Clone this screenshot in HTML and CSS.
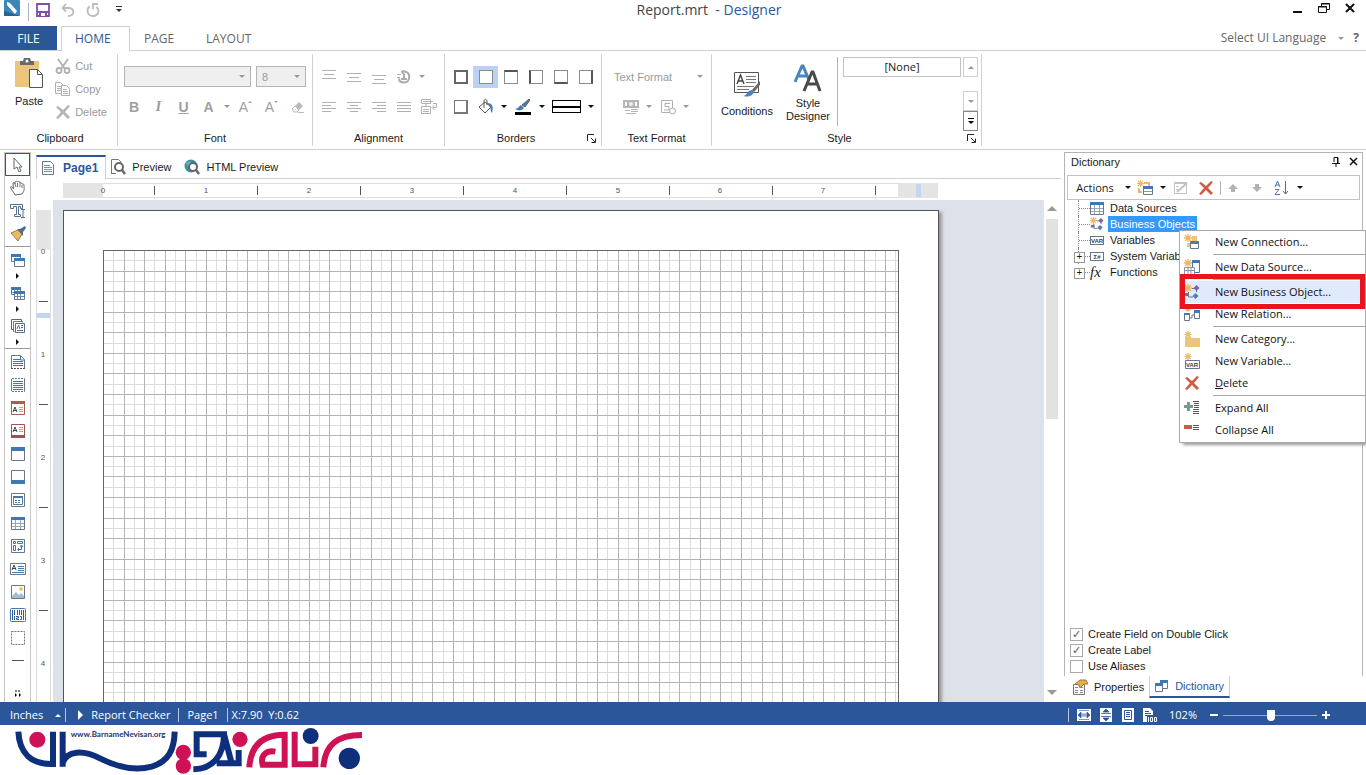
FILE: index.html
```html
<!DOCTYPE html>
<html lang="en">
<head>
<meta charset="utf-8">
<title>Report.mrt - Designer</title>
<link rel="stylesheet" href="styles.css">
</head>
<body>
<svg class="defs" aria-hidden="true">
  <defs>
    <symbol id="star" viewBox="0 0 8 8"><path d="M4 0v8M0 4h8M1 1l6 6M7 1L1 7" stroke="#ecb963" stroke-width="1.4"/><circle cx="4" cy="4" r="2" fill="#ecb963"/></symbol>
    <symbol id="cross" viewBox="0 0 16 16"><path d="M1 3l2-1 5 4 5-5 2 1-5 6 5 5-2 2-5-5-5 5-2-1 5-6z" fill="currentColor"/></symbol>
    <symbol id="table" viewBox="0 0 14 14"><path d="M.5 1.500h13v12H.5z" fill="#fff" stroke="#68788c"/><path d="M0 1h14v3H0z" fill="#3f78b5"/><path d="M1 7.500h12M1 10.500h12M4.500 4v9M9.500 4v9" stroke="#9aa5b3"/></symbol>
    <symbol id="bizobj" viewBox="0 0 16 16"><path d="M4.500 8v5H9M8 4.500h4.500V8" fill="none" stroke="#68788c"/><use href="#star" width="8" height="8"/><path d="M12.500 1l3 3-3 3-3-3z" fill="#8060b0"/><path d="M11.500 9l3 3-3 3-3-3z" fill="#4d7fb8"/><path d="M1 9h4v3H1z" fill="#68788c"/></symbol>
    <symbol id="win2" viewBox="0 0 14 14"><path d="M.5 1.500h9v7h-9z" fill="#fff" stroke="#68788c"/><path d="M0 1h10v3H0z" fill="#3f78b5"/><path d="M3.500 5.500h10v8h-10z" fill="#fff" stroke="#68788c"/><path d="M3 5h11v3H3z" fill="#3f78b5"/></symbol>
    <symbol id="launch" viewBox="0 0 9 9"><path d="M.5 7V.5H7M4 4l4 4M8.500 4.500v4h-4" fill="none" stroke="#222"/></symbol>
    <symbol id="lens" viewBox="0 0 16 16"><circle cx="9" cy="8" r="4" fill="#fff" stroke="#666" stroke-width="2"/><path d="M12 11l3 4" stroke="#666" stroke-width="2.500"/></symbol>
  </defs>
</svg>
<div class="app">
  <header class="titlebar">
    <div class="quick">
      <svg class="i16" viewBox="0 0 16 16"><rect width="16" height="16" rx="1" fill="#3f86b8"/><path d="M0 11l16 5H0z" fill="#236594"/><path d="M3 2l3 1 7 8-2 3-8-9z" fill="#fff"/></svg>
      <span class="vline"></span>
      <button class="plain" aria-label="Save"><svg class="i14" viewBox="0 0 14 14"><path d="M1 1h12v12H1z" fill="#fff" stroke="#8150a5" stroke-width="1.800"/><path d="M1 8h12v2H1zM3 9h8v4H3z" fill="#8150a5"/><path d="M5 10h4v3H5z" fill="#fff"/></svg></button>
      <button class="plain" aria-label="Undo"><svg class="i14" viewBox="0 0 14 14" fill="none" stroke="#bcbcbc" stroke-width="1.800"><path d="M5 1L1.500 5 5 8.500M2 5h6c6 0 6 8-1 8"/></svg></button>
      <button class="plain" aria-label="Redo"><svg class="i14" viewBox="0 0 14 14" fill="none" stroke="#bcbcbc" stroke-width="1.800"><path d="M4 3c-4 3-3 10 3 10s7-7 3-9M7 6V1h5"/></svg></button>
      <button class="plain more" aria-label="Customize"><svg viewBox="0 0 6 7" width="6" height="7"><path d="M0 .5h6" stroke="#333"/><path d="M0 3h6L3 6z" fill="#333"/></svg></button>
    </div>
    <h1 class="title">Report.mrt &nbsp;<span>- Designer</span></h1>
    <div class="winbtns">
      <button class="plain" aria-label="Minimize"><svg viewBox="0 0 12 12"><path d="M1 9h9" stroke="#111" stroke-width="2"/></svg></button>
      <button class="plain" aria-label="Restore"><svg viewBox="0 0 12 12" fill="#fff" stroke="#111"><path d="M3.500 .5h8v6h-8zM3 1h9"/><path d="M.5 3.500h8v6h-8zM0 4h9"/></svg></button>
      <button class="plain" aria-label="Close"><svg viewBox="0 0 12 12"><path d="M2 1l8 8M10 1l-8 8" stroke="#111" stroke-width="2"/></svg></button>
    </div>
  </header>

  <nav class="tabs">
    <button class="tab file">FILE</button><button class="tab on">HOME</button><button class="tab">PAGE</button><button class="tab">LAYOUT</button>
    <div class="lang"><button class="plain">Select UI Language</button><i class="dn g"></i><b>?</b></div>
  </nav>

  <section class="ribbon">
    <div class="group clip">
      <div class="gbody">
        <button class="plain paste"><svg viewBox="0 0 28 31" width="28" height="31"><path d="M0 3h24v26H0z" fill="#ecc47c"/><path d="M5 3h3l1-3h6l1 3h3v4H5z" fill="#6a6a6a"/><circle cx="12" cy="3" r="1.500" fill="#fff"/><path d="M14.500 11.500h8l5 5v13h-13z" fill="#fff" stroke="#555"/><path d="M22.500 11.500v5h5" fill="none" stroke="#555"/></svg>Paste</button>
        <div class="cmds dim">
          <button class="plain"><svg class="i16" viewBox="0 0 16 16" fill="none" stroke="#b0b0b0" stroke-width="1.800"><path d="M3 1l7 10M13 1L6 11"/><circle cx="4" cy="12.500" r="2.500"/><circle cx="12" cy="12.500" r="2.500"/></svg>Cut</button>
          <button class="plain"><svg class="i16" viewBox="0 0 16 16" fill="#fff" stroke="#b0b0b0"><path d="M.5 1.500h5l3 3v8h-8zM2 5.500h4M2 7.500h4M2 9.500h4"/><path d="M6.500 4.500h5l3 3v7h-8zM8 8.500h4M8 10.500h5M8 12.500h5"/></svg>Copy</button>
          <button class="plain"><svg class="i16"><use href="#cross"/></svg>Delete</button>
        </div>
      </div>
      <div class="glabel">Clipboard</div>
    </div>

    <div class="group font">
      <div class="gbody col">
        <div class="row combos"><span class="combo wide"><select aria-label="Font name" disabled><option></option></select><i class="dn g"></i></span><span class="combo"><select aria-label="Font size" disabled><option>8</option></select><i class="dn g"></i></span></div>
        <div class="row fmt">
          <button class="plain b">B</button><button class="plain it">I</button><button class="plain u">U</button><button class="plain b">A</button><button class="plain thin" aria-label="Font color"><i class="dn g"></i></button>
          <button class="plain" aria-label="Grow font">A<svg viewBox="0 0 5 14" width="5" height="14"><path d="M0 3h4L2 1z" fill="#a0a0a0"/></svg></button>
          <button class="plain" aria-label="Shrink font">A<svg viewBox="0 0 5 14" width="5" height="14"><path d="M0 1h4L2 3z" fill="#a0a0a0"/></svg></button>
          <button class="plain" aria-label="Clear"><svg viewBox="0 0 14 14" class="i14"><path d="M1 9l7-7 4 4-6 6H3z" fill="#bbb"/><path d="M1 9l3-3 4 4-2 2H3z" fill="#fff" stroke="#bbb"/><path d="M7 12.500h6" stroke="#bbb"/></svg></button>
        </div>
      </div>
      <div class="glabel">Font</div>
    </div>

    <div class="group align">
      <div class="gbody col">
        <div class="row">
          <button class="plain" aria-label="Top"><svg class="i14 ln" viewBox="0 0 14 14"><path d="M0 .5h14M2 4.500h10M0 8.500h14"/></svg></button>
          <button class="plain" aria-label="Middle"><svg class="i14 ln" viewBox="0 0 14 14"><path d="M0 3.500h14M2 7.500h10M0 11.500h14"/></svg></button>
          <button class="plain" aria-label="Bottom"><svg class="i14 ln" viewBox="0 0 14 14"><path d="M0 5.500h14M2 9.500h10M0 13.500h14"/></svg></button>
          <button class="plain" aria-label="Angle"><svg class="i14" viewBox="0 0 14 14" fill="none" stroke="#aaa" stroke-width="2"><path d="M7 1.500c7 0 7 11 0 11-4 0-5-2-5-4M7 4v5M4 9h6M7 0L5 2l2 2"/><path d="M0 4.500h4M0 7.500h3" stroke-width="1"/></svg></button>
          <button class="plain thin" aria-label="Angle menu"><i class="dn g"></i></button>
        </div>
        <div class="row">
          <button class="plain" aria-label="Left"><svg class="i14 ln" viewBox="0 0 14 14"><path d="M0 2.500h14M0 5.500h9M0 8.500h14M0 11.500h9"/></svg></button>
          <button class="plain" aria-label="Center"><svg class="i14 ln" viewBox="0 0 14 14"><path d="M0 2.500h14M3 5.500h8M0 8.500h14M3 11.500h8"/></svg></button>
          <button class="plain" aria-label="Right"><svg class="i14 ln" viewBox="0 0 14 14"><path d="M0 2.500h14M5 5.500h9M0 8.500h14M5 11.500h9"/></svg></button>
          <button class="plain" aria-label="Justify"><svg class="i14 ln" viewBox="0 0 14 14"><path d="M0 2.500h14M0 5.500h14M0 8.500h14M0 11.500h14"/></svg></button>
          <button class="plain" aria-label="Wrap"><svg class="i16 ln" viewBox="0 0 16 16"><path d="M.5 .5h9v4h-9zM.5 7.500h9v7h-9zM2 2.500h10M2 10.500h6M2 12.500h6M5 5v2M12 4.500h3.500v4H12M13.500 6L11 8.500l2.500 2.500"/></svg></button>
        </div>
      </div>
      <div class="glabel">Alignment</div>
    </div>

    <div class="group bord">
      <div class="gbody col">
        <div class="row">
          <button class="plain" aria-label="All"><span class="sq all"></span></button><button class="plain sel" aria-label="None"><span class="sq"></span></button><button class="plain" aria-label="Top"><span class="sq t"></span></button><button class="plain" aria-label="Left"><span class="sq l"></span></button><button class="plain" aria-label="Bottom"><span class="sq bt"></span></button><button class="plain" aria-label="Right"><span class="sq r"></span></button>
        </div>
        <div class="row">
          <button class="plain" aria-label="Shadow"><span class="sq sh"></span></button>
          <button class="plain" aria-label="Fill"><svg class="i16" viewBox="0 0 16 16"><path d="M7 3l6 5-6 6-6-6z" fill="#fff" stroke="#555"/><path d="M6 9V2c0-2 3-2 3 0v4" fill="none" stroke="#555"/><path d="M9 4c5 0 7 3 5 10-2-2-1-5-2-6z" fill="#4c7cae"/></svg></button>
          <button class="plain thin" aria-label="Fill menu"><i class="dn"></i></button>
          <button class="plain thick" aria-label="Color"><svg class="i16" viewBox="0 0 16 16"><path d="M0 10c3 0 4-3 6-4l3 3c-2 3-6 3-9 1z" fill="#4c7cae"/><path d="M7 6l7-6 1 1-5 7z" fill="#4c7cae" stroke="#567"/><path d="M0 13h16v3H0z" fill="#000"/></svg></button>
          <button class="plain thin" aria-label="Color menu"><i class="dn"></i></button>
          <button class="plain style" aria-label="Line style"><span class="linebox"></span></button>
          <button class="plain thin" aria-label="Line menu"><i class="dn"></i></button>
        </div>
      </div>
      <div class="glabel">Borders</div>
      <button class="plain launch" aria-label="Borders dialog"><svg width="9" height="9"><use href="#launch"/></svg></button>
    </div>

    <div class="group tf">
      <div class="gbody col dim">
        <div class="row spread"><button class="plain">Text Format</button><i class="dn g"></i></div>
        <div class="row tfi">
          <button class="plain" aria-label="Currency"><svg class="i16" viewBox="0 0 16 16"><path d="M0 1h16v8H0z" fill="#b5b5b5"/><path d="M2 3h2v4H2zM12 3h2v4h-2z" fill="#fff"/><circle cx="8" cy="5" r="2" fill="#eee"/><path d="M8 10.500h7M8 12.500h7M3 14.500h10M2 11.500h5" stroke="#b5b5b5"/></svg></button><button class="plain thin" aria-label="Currency menu"><i class="dn g"></i></button>
          <button class="plain" aria-label="Date"><svg class="i16" viewBox="0 0 16 16"><path d="M1.500 1.500h11v12h-11zM10 4.500H5v3h4v3.500H4" fill="none" stroke="#b0b0b0"/><circle cx="12.500" cy="12" r="3" fill="#fff" stroke="#aaa"/></svg></button><button class="plain thin" aria-label="Date menu"><i class="dn g"></i></button>
        </div>
      </div>
      <div class="glabel">Text Format</div>
    </div>

    <div class="group sty">
      <div class="gbody">
        <button class="plain big cond"><svg viewBox="0 0 28 28" width="28" height="28"><path d="M1.500 2.500h24v20h-24z" fill="#fff" stroke="#555"/><path d="M4 14L7.500 5 11 14M5 11h5" fill="none" stroke="#444" stroke-width="1.400"/><path d="M13 6.500h10M13 9.500h10M13 12.500h10M4 16.500h17M4 19.500h12" stroke="#777"/><path d="M10 26c4 0 4-6 9-6l2 2c-2 5-6 5-11 4z" fill="#4a83bd"/><path d="M19 20l8-9v4l-6 7z" fill="#666"/></svg>Conditions</button>
        <button class="plain big des"><svg viewBox="0 0 28 28" width="28" height="28" fill="none" stroke-width="3"><path d="M1 18L8 2h1l6 14M3 12h9" stroke="#4a83bd"/><path d="M10 27l8-19h1l7 19M13 20h11" stroke="#4a4a4a"/></svg>Style<br>Designer</button>
        <span class="vline tall"></span>
        <button class="stylebox">[None]</button>
        <div class="spin"><button aria-label="Up"><i class="upa"></i></button><span></span><button aria-label="Down"><i class="dn g"></i></button><button class="dk" aria-label="More"><svg viewBox="0 0 6 7" width="6" height="7"><path d="M0 .5h6" stroke="#000"/><path d="M0 3h6L3 6z"/></svg></button></div>
      </div>
      <div class="glabel">Style</div>
      <button class="plain launch" aria-label="Style dialog"><svg width="9" height="9"><use href="#launch"/></svg></button>
    </div>
  </section>

  <main class="work">
    <aside class="tools">
      <button class="on" aria-label="Select"><svg viewBox="0 0 14 14"><path d="M3 0v11l3-2 2 5 2-1-2-4h3z" fill="#fff" stroke="#666"/></svg></button>
      <button aria-label="Hand"><svg viewBox="0 0 16 16"><path d="M5 15C4 12 1 10 0.500 7c1-1 2 0 3 2L3 3c1-1 2 0 2 1V2c1-1 2-1 2.500 0 1-1 2-1 2.500 1 1-1 2 0 2 1 1 0 2 0 2 1 0 4 1 5-2 9z" fill="#fff" stroke="#666"/><path d="M5 4l1 3M7.500 3v4M10 3v4M12 5v3" stroke="#777"/></svg></button>
      <button aria-label="Text"><svg viewBox="0 0 16 16"><path d="M.5 1.500h12v4h-2v-2h-2v8h2v2h-6v-2h2v-8h-3v2h-3z" fill="#fff" stroke="#56708c"/><path d="M11 6.500h4M13 6v8M11 14.500h4" stroke="#56708c"/></svg></button>
      <button aria-label="Brush"><svg viewBox="0 0 16 16"><path d="M1 7l7-3 4 4-4 7z" fill="#ecb963" stroke="#9d7c44"/><path d="M7 3l3 0 5-3 1 2-3 4v4z" fill="#526d8b"/></svg></button>
      <hr>
      <button aria-label="Bands"><svg><use href="#win2"/></svg></button><i class="rt"></i>
      <button aria-label="Cross bands"><svg viewBox="0 0 14 14"><use href="#win2"/><path d="M4 10.500h9M6.500 8v5M9.500 8v5M1 6.500h2M3.500 4v1M6.500 4v1" stroke="#68a"/></svg></button><i class="rt"></i>
      <button aria-label="Components"><svg viewBox="0 0 14 14"><path d="M2 10.500H.5V.5h10V2" fill="none" stroke="#666"/><path d="M3.500 12.500h-1v-10h9v1" fill="none" stroke="#777"/><path d="M4.500 4.500h9v9h-9z" fill="#fff" stroke="#56708c"/><path d="M6 10l1.500-4L9 10M10 6.500h2M10 8.500h2M6 11.500h6" fill="none" stroke="#56708c"/></svg></button><i class="rt"></i>
      <hr>
      <button aria-label="Report title"><svg viewBox="0 0 14 14"><path d="M.5 13V.5h9l4 4V13" fill="#fff" stroke="#68788c"/><path d="M2 4.500h7M2 6.500h10M2 8.500h10M2 10.500h10M9.500 1v4H13" fill="none" stroke="#3f78b5"/><path d="M0 13.500h14" stroke="#555" stroke-dasharray="2 1"/></svg></button>
      <button aria-label="Summary"><svg viewBox="0 0 14 14"><path d="M.5.500h13v13H.500z" fill="#fff" stroke="#68788c"/><path d="M2 3.500h10M2 5.500h10M2 7.500h10M2 9.500h10M2 11.500h10" stroke="#3f78b5"/><path d="M0 .5h14M0 13.500h14" stroke="#fff" stroke-dasharray="1 2"/></svg></button>
      <button aria-label="Page header"><svg viewBox="0 0 14 14"><path d="M.5.500h13v13H.5z" fill="#fff" stroke="#a2624f"/><path d="M0 0h14v3H0z" fill="#a2624f"/><path d="M2 11l2-5 2 5M2 9.500h4" fill="none" stroke="#444"/><path d="M8 6.500h4M8 8.500h4M8 10.500h4" stroke="#d79a8a"/></svg></button>
      <button aria-label="Page footer"><svg viewBox="0 0 14 14"><path d="M.5.500h13v13H.5z" fill="#fff" stroke="#a05050"/><path d="M0 11h14v3H0z" fill="#a05050"/><path d="M2 8l2-5 2 5M2 6.500h4" fill="none" stroke="#444"/><path d="M8 3.500h4M8 5.500h4M8 7.500h4" stroke="#d79a8a"/></svg></button>
      <button aria-label="Header"><svg viewBox="0 0 14 14"><path d="M.5.500h13v13H.5z" fill="#fff" stroke="#68788c"/><path d="M0 0h14v4H0z" fill="#3f78b5"/></svg></button>
      <button aria-label="Footer"><svg viewBox="0 0 14 14"><path d="M.5.500h13v13H.5z" fill="#fff" stroke="#68788c"/><path d="M0 10h14v4H0z" fill="#3f78b5"/></svg></button>
      <button aria-label="Panel"><svg viewBox="0 0 14 14"><path d="M.5.500h13v13H.5zM2.500 3.500h9v8h-9z" fill="#fff" stroke="#68788c"/><path d="M2 3h10v2H2z" fill="#3f78b5"/><path d="M4 7.500h6M4 9.500h6" stroke="#3f78b5" stroke-dasharray="2 1"/></svg></button>
      <button aria-label="Table"><svg><use href="#table"/></svg></button>
      <button aria-label="Cross tab"><svg viewBox="0 0 14 14"><path d="M.5.500h13v13H.5z" fill="#fff" stroke="#68788c"/><path d="M2.500 2.500h2v2h-2zM6.500 2.500h5v2h-5zM2.500 6.500h2v5h-2zM7 10.500h3.500v-4M9 8l1.500-2L12 8M8 9l-1.500 1.500L8 12" fill="none" stroke="#3f78b5"/></svg></button>
      <button aria-label="Text box"><svg viewBox="0 0 16 14"><path d="M.5 1.500h15v11H.500z" fill="#fff" stroke="#68788c"/><path d="M2 8l2-5 2 5M2 6.500h4" fill="none" stroke="#444"/><path d="M8 4.500h6M8 6.500h6M8 8.500h6M2 10.500h12" stroke="#3f78b5"/></svg></button>
      <button aria-label="Image"><svg viewBox="0 0 14 14"><path d="M.5.500h13v13H.5z" fill="#fff" stroke="#68788c"/><path d="M1 13v-2l4-4 3 3 2-2 3 3v2z" fill="#a9bccf"/><circle cx="10" cy="4" r="2" fill="#ecc47c"/></svg></button>
      <button aria-label="Bar code"><svg viewBox="0 0 16 14"><rect x=".5" y=".5" width="15" height="13" rx="1" fill="#fff" stroke="#3f78b5"/><path d="M2.500 2v10M4.500 2v5M7.500 2v5M9.500 2v5M11.500 2v5M13.500 2v10M4.500 8v4M6 8.500h2.500v1.500H6.500v1.500H9M10 8.500h1.500v3H10" fill="none" stroke="#2f5f92"/></svg></button>
      <button aria-label="Shape"><svg viewBox="0 0 14 14"><path d="M.5.500h13v13H.5z" fill="#fff" stroke="#777" stroke-dasharray="2 1"/></svg></button>
      <button aria-label="Line"><svg viewBox="0 0 14 14"><path d="M1 6.500h12" stroke="#555"/></svg></button>
      <button class="last" aria-label="More tools"><svg class="i8" viewBox="0 0 8 8"><path d="M1 1h2M4 1h2" stroke="#000"/><path d="M1 3l2 2-2 2zM5 3l2 2-2 2z"/></svg></button>
    </aside>

    <section class="center">
      <div class="doctabs">
        <button class="dt on"><svg class="i14" viewBox="0 0 14 14"><path d="M1.500.5h8l3 3v10h-11z" fill="#fff" stroke="#68788c"/><path d="M3 4.500h6M3 6.500h8M3 8.500h8M3 10.500h8" stroke="#7796ba"/></svg>Page1</button>
        <button class="dt"><svg class="i16" viewBox="0 0 16 16"><path d="M1.500 14V.5h7l3 3" fill="none" stroke="#777"/><path d="M1 14.500h5" stroke="#777"/><use href="#lens"/></svg>Preview</button>
        <button class="dt web"><svg class="i16" viewBox="0 0 16 16"><circle cx="7" cy="7" r="6.500" fill="#3a8fa8"/><path d="M2 4l4-2 2 3-4 3z" fill="#6cb8a0"/><use href="#lens"/></svg>HTML Preview</button>
      </div>
      <div class="stage">
        <svg class="hruler" id="hruler" aria-label="Horizontal ruler"></svg>
        <svg class="vruler" id="vruler" aria-label="Vertical ruler"></svg>
        <div class="canvas"><div class="sheet"><svg class="grid" id="grid"></svg></div></div>
        <div class="scroll"><i class="upa"></i><span class="thumb"></span><i class="dn g"></i></div>
      </div>
    </section>

    <aside class="side">
      <div class="dict">
        <div class="dhead">Dictionary<span><svg viewBox="0 0 10 10" width="10" height="10"><path d="M3 5V.500h4V6M1 6.500h8M5 6v4M6.500 1v5" fill="none" stroke="#111"/></svg><svg viewBox="0 0 10 10" width="10" height="10"><path d="M1 1l7 7M8 1L1 8" stroke="#111" stroke-width="1.500"/></svg></span></div>
        <div class="dbar">
          <button class="plain act">Actions</button><i class="dn"></i>
          <svg class="i16" viewBox="0 0 16 16"><use href="#star" width="7" height="7"/><path d="M2 8v4h3M7 3h5v3" fill="none" stroke="#ecb963" stroke-width="2"/><path d="M6.500 6.500h9v8h-9z" fill="#fff" stroke="#68788c"/><path d="M6 6h10v3H6z" fill="#3f78b5"/><path d="M7 11.500h8" stroke="#89a"/></svg><i class="dn"></i>
          <svg class="i14 ed" viewBox="0 0 14 14" fill="none" stroke="#c2c2c2"><path d="M.5 1.500h12v11H.500zM0 2.500h13M2 5.500h3M2 8.500h2"/><path d="M3 11L13 2" stroke-width="2"/></svg>
          <svg class="i16 red"><use href="#cross"/></svg><span class="vline"></span>
          <svg class="i16" viewBox="0 0 16 16"><path d="M8 4l5 5h-3v3H6V9H3z" fill="#b2b2b2"/></svg>
          <svg class="i16 ar" viewBox="0 0 16 16"><path d="M8 12l5-5h-3V4H6v3H3z" fill="#b2b2b2"/></svg>
          <svg class="i16 az" viewBox="0 0 16 16" fill="none"><path d="M1 7l2.500-6L6 7M2 5h3" stroke="#3f78b5"/><path d="M1 9.500h4l-4 5h5" stroke="#8060b0"/><path d="M11.500 1v13M9 11l2.500 3 2.500-3" stroke="#666"/></svg><i class="dn"></i>
        </div>
        <ul class="tree">
          <li><i class="br"></i><svg viewBox="0 0 14 14"><use href="#table"/></svg>Data Sources</li>
          <li class="sel"><i class="br"></i><svg viewBox="0 0 16 16"><use href="#bizobj"/></svg><span>Business Objects</span></li>
          <li><i class="br"></i><svg viewBox="0 0 14 14"><path d="M0 3.500h14M0 11.500h14M.5 3v9M13.500 3v9" stroke="#68788c"/><text class="tag" x="7" y="10">VAR</text></svg>Variables</li>
          <li><i class="br plus"></i><svg viewBox="0 0 14 14"><path d="M0 3.500h14M0 11.500h14M.5 3v9M13.500 3v9" stroke="#68788c"/><text class="tag" x="7" y="10">Σ#</text></svg>System Variables</li>
          <li class="end"><i class="br plus"></i><em>fx</em>Functions</li>
        </ul>
        <div class="opts">
          <label><input type="checkbox" checked>Create Field on Double Click</label>
          <label><input type="checkbox" checked>Create Label</label>
          <label><input type="checkbox">Use Aliases</label>
        </div>
      </div>
      <div class="ptabs">
        <button class="pt"><svg class="i16" viewBox="0 0 16 16"><path d="M1.500 5.500h11v10h-11z" fill="#fff" stroke="#777"/><path d="M3 8.500h3M3 11.500h3M3 13.500h3M8 8.500h3M8 11.500h3M8 13.500h3" stroke="#888"/><path d="M3 5l5-4 6 0 2 4-4 0-4 4-1-3z" fill="#e3b04c" stroke="#987a38"/></svg>Properties</button>
        <button class="pt on"><svg class="i14" viewBox="0 0 14 14"><path d="M5.500 1.500h7v8h-7z" fill="#fff" stroke="#68788c"/><path d="M5 1h8v3H5z" fill="#3f78b5"/><path d="M.5 4.500h7v8h-7z" fill="#fff" stroke="#68788c"/><path d="M0 4h8v3H0z" fill="#3f78b5"/></svg>Dictionary</button>
      </div>
    </aside>
  </main>

  <footer class="status">
    <button class="plain">Inches</button><i class="upa w"></i><span class="vline"></span>
    <button class="plain chk"><i class="rt w"></i>Report Checker</button><span class="vline"></span>
    <span>Page1</span><span class="vline"></span><span class="xy">X:7.90 &nbsp;Y:0.62</span>
    <div class="zoom">
      <span class="vline"></span>
      <svg viewBox="0 0 14 14"><path d="M0 1h14v12H0z" fill="#fff"/><path d="M1 7l3-3v2h6V4l3 3-3 3V8H4v2zM2 2.500h10M2 11.500h10" fill="#2b579a" stroke="#2b579a" stroke-width=".6"/><path d="M4 7h6" stroke="#fff"/></svg>
      <svg viewBox="0 0 14 14"><path d="M1 0h12v14H1z" fill="#fff"/><path d="M7 1l3 3H4zM7 13l3-3H4zM2 5.500h10M2 8.500h10" fill="#2b579a" stroke="#2b579a" stroke-width=".8"/></svg>
      <svg viewBox="0 0 14 14"><path d="M1 0h12v14H1z" fill="#fff"/><path d="M3.500 2.500h7v9h-7zM5 4.500h4M5 6.500h4M5 8.500h4" fill="none" stroke="#2b579a"/></svg>
      <svg viewBox="0 0 14 14"><path d="M0 0h7l3 3v4H4v7H0z" fill="#fff"/><path d="M2 3.500h4M2 5.500h6M2 7.500h2" stroke="#2b579a"/><path d="M5.500 9v5M7.500 9.500h2v4h-2zM11.500 9.500h2v4h-2z" fill="none" stroke="#fff"/></svg>
      <span class="pct">102%</span>
      <button class="plain" aria-label="Zoom out"><svg class="i8" viewBox="0 0 8 8"><path d="M0 4h8" stroke="#fff" stroke-width="2"/></svg></button><input type="range" min="0" max="100" value="51" aria-label="Zoom"><button class="plain" aria-label="Zoom in"><svg class="i8" viewBox="0 0 8 8"><path d="M0 4h8M4 0v8" stroke="#fff" stroke-width="2"/></svg></button>
    </div>
  </footer>

  <div class="brand">
    <svg viewBox="0 75 1140 150" width="380" height="50" fill="none" stroke-width="18" role="img" aria-label="BarnameNevisan">
      <g stroke="#0d2f7c">
        <path d="M55 95C58 160 95 194 159 192V95M188 95V200M188 190C200 150 250 150 300 175S400 215 455 200C505 185 523 150 524 95"/>
        <path d="M620 163H590V103H672C672 165 640 207 580 208M650 190H716V150M672 103L695 190"/>
      </g>
      <g stroke="#cf1155">
        <path d="M748 202C752 135 790 104 854 104V194H788C780 165 800 150 826 155M884 95V193H946V140M970 202C975 135 1010 105 1086 105"/>
      </g>
      <g fill="#cf1155"><circle cx="112" cy="119" r="24"/><circle cx="550" cy="157" r="23"/><circle cx="550" cy="198" r="23"/><circle cx="720" cy="118" r="23"/></g>
      <g fill="#0d2f7c"><circle cx="932" cy="108" r="24"/><circle cx="1048" cy="175" r="32"/></g>
      <text class="url" x="212" y="111">www.BarnameNevisan.org</text>
    </svg>
  </div>

  <div class="menu" role="menu">
    <button><svg viewBox="0 0 16 16"><use href="#star" width="8" height="8"/><path d="M8 2h5v5H8zM3 9h3v4H3z" fill="#ecc47c"/><path d="M6.500 7.500h8v7h-8z" fill="#fff" stroke="#68788c"/><path d="M6 7h9v3H6z" fill="#68788c"/></svg>New Connection...</button><hr>
    <button><svg viewBox="0 0 16 16"><path d="M8.500 1.500h7v12h-7z" fill="#fff" stroke="#3f78b5"/><path d="M8 1h8v3H8z" fill="#3f78b5"/><use href="#star" width="8" height="8"/><path d="M.5 8.500h10v7H.500zM0 11.500h10M4 8v7M7 8v7" fill="#fff" stroke="#8995a5"/></svg>New Data Source...</button><hr>
    <button class="hot"><svg viewBox="0 0 16 16"><use href="#bizobj"/></svg>New Business Object...</button>
    <button><svg viewBox="0 0 16 16"><use href="#star" width="8" height="6"/><path d="M.5 7.500h5v7h-5zM10.500 4.500h5v8h-5zM6 12h2V9h2" fill="#fff" stroke="#68788c"/><path d="M0 7h6v2H0zM10 4h6v3h-6z" fill="#3f78b5"/></svg>New Relation...</button><hr>
    <button><svg viewBox="0 0 16 16"><path d="M1 6h5l2 1h8v9H1z" fill="#ecc47c"/><use href="#star" width="8" height="7"/></svg>New Category...</button>
    <button><svg viewBox="0 0 16 16"><use href="#star" width="8" height="7"/><path d="M1.500 7.500h14v8h-14z" fill="#fff" stroke="#68788c"/><text class="tag" x="8" y="14">VAR</text></svg>New Variable...</button>
    <button><svg class="red" viewBox="0 0 16 16"><use href="#cross"/></svg><span><u>D</u>elete</span></button><hr>
    <button><svg viewBox="0 0 16 16"><path d="M3 2h3v3h3v3H6v3H3V8H0V5h3z" fill="#6fa08c"/><path d="M9 1.500h6M10 3.500h5M10 5.500h5M10 7.500h5M9 9.500h6M9 11.500h6M9 13.500h6" stroke="#555"/></svg>Expand All</button>
    <button><svg viewBox="0 0 16 16"><path d="M0 3h8v4H0z" fill="#cf5b40"/><path d="M9 3.500h6M9 5.500h6M9 7.500h6" stroke="#555"/></svg>Collapse All</button>
    <div class="mark"></div>
  </div>
</div>
<script src="app.js"></script>
</body>
</html>
```
FILE: styles.css
```css
* { box-sizing: border-box; }
body { margin: 0; font: 11px/14px "Liberation Sans", Arial, sans-serif; color: #1a1a1a; background: #fff; }
button, select, input { font: inherit; color: inherit; margin: 0; }
svg { display: block; flex: none; }
.defs { position: absolute; width: 0; height: 0; }
.plain { display: flex; align-items: center; justify-content: center; border: 0; background: none; padding: 0; }
.i14 { width: 14px; height: 14px; }
.i16 { width: 16px; height: 16px; }
.vline { width: 1px; background: #aeb4c0; align-self: stretch; flex: none; }
.dn { flex: none; width: 0; height: 0; border: 3px solid transparent; border-top-color: #111; border-bottom: 0; }
.dn.g { border-top-color: #999; }
.upa { flex: none; width: 0; height: 0; border: 3px solid transparent; border-bottom-color: #999; border-top: 0; }
.rt { flex: none; width: 0; height: 0; border: 4px solid transparent; border-left-color: #111; border-right: 0; }
.dim { color: #999; }
.tag { font: bold 6px "Liberation Sans", sans-serif; fill: #345; text-anchor: middle; }

.app { position: relative; height: 100vh; display: flex; flex-direction: column; overflow: hidden; }

.titlebar { display: grid; grid-template-columns: 1fr auto 1fr; height: 26px; flex: none; }
.quick { display: flex; align-items: flex-start; gap: 11px; padding: 0 4px; }
.quick .vline { height: 18px; margin: 3px -4px 0 -3px; }
.quick .plain { margin-top: 3px; }
.quick .more { margin: 6px 0 0 5px; }
.title { margin: 0; font: 14px/19px "Open Sans", sans-serif; color: #444; padding-left: 52px; }
.title span { color: #2b579a; }
.winbtns { display: flex; justify-content: flex-end; align-items: flex-start; gap: 14px; padding: 3px 10px 0 0; }
.winbtns svg { width: 12px; height: 12px; }

.tabs { display: flex; align-items: stretch; height: 25px; flex: none; font: 12px/18px "Open Sans", sans-serif; color: #666; border-bottom: 1px solid #d0d0d0; }
.tab { border: 1px solid transparent; border-bottom: 0; background: none; padding: 0 13px; margin-bottom: -1px; min-width: 62px; text-align: left; }
.tab.file { background: #2b579a; color: #fff; min-width: 57px; margin: 0 4px 0 0; padding: 0 6px; text-align: center; }
.tab.on { color: #2b579a; background: #fff; border-color: #d0d0d0; min-width: 69px; }
.lang { margin-left: auto; display: flex; align-items: center; gap: 12px; padding-right: 7px; }
.lang b { margin-left: -3px; }

.ribbon { display: flex; height: 99px; flex: none; border-bottom: 1px solid #d0d0d0; padding: 3px 0; }
.group { position: relative; display: flex; flex-direction: column; border-right: 1px solid #d0d0d0; }
.gbody { flex: 1; display: flex; }
.gbody.col { flex-direction: column; gap: 3px; padding-top: 9px; }
.glabel { text-align: center; height: 14px; margin-bottom: 1px; }
.row { display: flex; align-items: center; height: 27px; }
.row .plain { width: 25px; height: 22px; flex: none; }
.row .thin { width: 12px; }
.clip { width: 118px; }
.clip .glabel { padding-left: 3px; }
.clip .gbody { padding: 4px 10px 0 15px; gap: 12px; justify-content: space-between; }
.paste { flex-direction: column; justify-content: flex-start; gap: 5px; align-self: flex-start; }
.cmds { display: flex; flex-direction: column; gap: 7px; flex: 1; }
.cmds .plain { gap: 4px; justify-content: flex-start; color: inherit; }
.cmds svg { color: #b5b5b5; }
.font { width: 195px; padding: 0 6px; }
.combos { gap: 5px; }
.combo { position: relative; width: 50px; height: 21px; display: flex; align-items: center; }
.combo.wide { width: 127px; }
.combo select { width: 100%; height: 100%; appearance: none; border: 1px solid #b4b4b4; border-radius: 0; background: #efefef; color: #999; padding: 0 5px; opacity: 1; }
.combo .dn { position: absolute; right: 6px; }
.fmt { color: #a0a0a0; font-size: 14px; }
.fmt .b { font-weight: bold; }
.fmt .it { font: italic bold 15px "Liberation Serif", serif; }
.fmt .u { text-decoration: underline; font-weight: bold; }
.fmt .plain { width: 26px; }
.fmt .thin { width: 12px; }
.fmt .b, .fmt .it, .fmt .u { width: 25px; }
.fmt .b:first-child { width: 20px; margin-right: 2px; }
.align { width: 132px; padding: 0 3px; }
.ln { fill: none; stroke: #b0b0b0; }
.bord { width: 157px; padding: 0 3px; }
.bord .glabel, .sty .glabel { padding-right: 14px; }
.sq { width: 14px; height: 14px; border: 1px solid #8c8c8c; background: #fff; }
.sq.all { border: 2px solid #666; }
.sq.t { border-top: 2px solid #555; }
.sq.l { border-left: 2px solid #555; }
.sq.bt { border-bottom: 2px solid #555; }
.sq.r { border-right: 2px solid #555; }
.sq.sh { border: 1px solid #777; border-width: 1px 2px 2px 1px; }
.sel.plain { background: #bdd1f5; }
.bord .thick { width: 26px; }
.bord .style { width: 37px; }
.linebox { width: 29px; height: 13px; border: 1px solid #000; background: linear-gradient(#000, #000) center / 100% 2px no-repeat; }
.launch { position: absolute; right: 5px; bottom: 3px; }
.tf { width: 110px; }
.tf .gbody { padding-left: 12px; padding-right: 8px; }
.tf .spread { justify-content: space-between; }
.tf .spread .plain { width: auto; }
.tf .tfi { padding-left: 4px; }
.sty { width: 270px; }
.sty .gbody { padding: 3px 3px 0 10px; align-items: flex-start; }
.big { flex-direction: column; gap: 6px; }
.big.cond { width: 50px; padding-top: 13px; }
.big.des { width: 50px; line-height: 13px; padding-top: 7px; gap: 5px; margin-left: 11px; margin-right: 4px; }
.sty .tall { height: 69px; margin-right: 5px; }
.stylebox { flex: 1; height: 20px; border: 1px solid #c2c2c2; background: #fff; padding: 0; font-family: "Open Sans", sans-serif; }
.spin { width: 15px; margin-left: 2px; display: flex; flex-direction: column; }
.spin span { height: 14px; }
.spin button { height: 20px; border: 1px solid #d0d0d0; background: #fff; padding: 0; display: flex; align-items: center; justify-content: center; }
.spin .dk { border-color: #888; }

.work { flex: 1; min-height: 0; display: flex; padding: 2px 3px 0 4px; }
.tools { width: 27px; border: 1px solid #c6c6c6; border-bottom: 0; display: flex; flex-direction: column; align-items: center; flex: none; }
.tools button { flex: none; width: 100%; height: 23px; border: 0; background: none; padding: 0; display: flex; align-items: center; justify-content: center; }
.tools .on { border: 1px solid #2b579a; }
.tools svg { width: 14px; height: 14px; }
.tools svg[viewBox="0 0 16 16"] { width: 16px; height: 16px; }
.tools svg[viewBox="0 0 16 14"] { width: 16px; }
.tools hr { flex: none; width: 100%; height: 1px; border: 0; background: #999; margin: 1px 0; }
.tools .rt { margin: 2px 0; border-width: 3px; border-right: 0; }
.tools .last { margin-top: auto; height: 16px; }
svg.i8.i8 { width: 8px; height: 8px; }

.center { flex: 1; min-width: 0; margin-left: 5px; display: flex; flex-direction: column; }
.doctabs { display: flex; height: 27px; padding-top: 3px; border-bottom: 1px solid #d0d0d0; flex: none; }
.dt { display: flex; align-items: center; gap: 6px; border: 0; background: none; padding: 0 4px; }
.dt.on { border: 1px solid #d0d0d0; border-top: 2px solid #2b579a; border-bottom: 0; background: #fff; margin-bottom: -1px; color: #2b579a; font-weight: bold; font-size: 12px; padding: 0 7px 0 4px; gap: 8px; }
.dt.web { margin-left: 5px; }
.stage { flex: 1; min-height: 0; display: grid; grid-template: 21px 1fr / 17px 1fr 17px; }
.hruler { grid-column: 2; width: 100%; height: 21px; }
.vruler { grid-row: 2; grid-column: 1; width: 17px; height: 100%; }
.hruler text, .vruler text { font-size: 8px; fill: #555; text-anchor: middle; }
.canvas { grid-row: 2; grid-column: 2; min-height: 0; overflow: hidden; background: #dde1ea; padding: 10px 10px 0; }
.sheet { width: 876px; height: 1100px; background: #fff; border: 1px solid #555; box-shadow: 3px 2px 3px #999; padding: 39px; }
.grid { width: 796px; height: 1000px; }
.scroll { grid-row: 2; grid-column: 3; display: flex; flex-direction: column; align-items: center; padding: 6px 1px 7px 0; }
.scroll .upa, .scroll .dn { border-width: 5px; }
.scroll .upa { border-top: 0; }
.scroll .dn { border-bottom: 0; margin-top: auto; }
.thumb { width: 12px; height: 200px; background: #e2e2e2; margin-top: 8px; }

.side { width: 299px; margin-left: 3px; display: flex; flex-direction: column; flex: none; }
.dict { flex: 1; min-height: 0; border: 1px solid #b4b4b4; border-bottom: 0; padding: 0 2px; display: flex; flex-direction: column; }
.dhead { display: flex; justify-content: space-between; padding: 2px 1px 0 4px; height: 22px; flex: none; }
.dhead span { display: flex; gap: 8px; padding-top: 2px; }
.dbar { display: flex; align-items: center; height: 25px; border: 1px solid #c2c2c2; padding: 0 5px; flex: none; }
.act { font: 11px/16px "Open Sans", sans-serif; min-width: 44px; }
.dbar .dn { margin: 0 6px 0 8px; }
.dbar svg + .dn { margin: 0 8px 0 7px; }
.dbar .ed { margin-right: 10px; }
.dbar .vline { height: 14px; align-self: center; margin: 0 4px 0 6px; }
.dbar .ar { margin: 0 9px 0 8px; }
.red { color: #cf5b40; }
.tree { list-style: none; margin: 0; padding: 0 0 0 11px; }
.tree li { display: flex; align-items: center; height: 16px; position: relative; }
.tree svg { width: 14px; height: 14px; margin-right: 6px; }
.tree em { font: italic 15px/15px "Liberation Serif", serif; width: 14px; margin-right: 6px; }
.tree .sel span { background: #3399ff; color: #fff; padding: 1px 2px; margin-left: -2px; }
.br { width: 12px; height: 16px; border-left: 1px dotted #888; background: repeating-linear-gradient(90deg, #888 0 1px, transparent 1px 2px) 0 8px / 100% 1px no-repeat; }
.end .br { border-left-color: transparent; }
.plus::before { content: "+"; position: absolute; left: -4px; top: 4px; width: 9px; height: 9px; border: 1px solid #999; background: #fff; font: 10px/7px "Liberation Sans", sans-serif; text-align: center; }
.opts { margin-top: auto; padding: 0 0 2px 3px; display: flex; flex-direction: column; }
.opts label { display: flex; align-items: center; gap: 5px; height: 16px; }
.opts input { appearance: none; width: 13px; height: 13px; border: 1px solid #aaa; background: #fff; }
.opts input:checked::before { content: "✓"; display: block; font: bold 11px/11px "DejaVu Sans", sans-serif; color: #555; text-align: center; }
.ptabs { display: flex; height: 26px; align-items: flex-start; padding-left: 3px; flex: none; }
.pt { display: flex; align-items: center; gap: 6px; height: 22px; border: 0; background: none; padding: 0 5px; }
.pt.on { color: #2b579a; border: solid #d0d0d0; border-width: 0 1px; border-bottom: 2px solid #2b579a; }

.status { display: flex; align-items: center; height: 23px; background: #2b579a; color: #fff; font: 11px/16px "Open Sans", sans-serif; padding: 3px 35px 0 10px; gap: 8px; flex: none; }
.status .vline { height: 14px; align-self: center; background: #b8c7de; }
.status .upa { border-bottom-color: #fff; margin: 0 -4px 0 4px; }
.status .rt { border-width: 5px; border-left-color: #fff; border-right: 0; }
.chk { gap: 8px; padding-left: 4px; }
.xy { margin-left: -4px; }
.zoom { margin-left: auto; display: flex; align-items: center; gap: 8px; }
.zoom svg { width: 14px; height: 14px; }
.zoom .plain { width: 10px; height: 14px; }
.pct { margin: 0 4px; }
.zoom input { appearance: none; width: 94px; height: 14px; background: linear-gradient(#8fa9d0, #8fa9d0) center / 100% 1px no-repeat; margin: 0 -4px; }
.zoom input::-webkit-slider-thumb { appearance: none; width: 8px; height: 11px; background: #fff; border-radius: 0 0 4px 4px; }
.brand { height: 50px; flex: none; }
.url { font: bold 24px "Lato", sans-serif; fill: #25336e; stroke: none; }

.menu { position: absolute; right: 0; top: 230px; width: 187px; padding-bottom: 1px; background: #fff; border: 1px solid #aaa; box-shadow: 3px 3px 3px -1px #999; display: flex; flex-direction: column; font: 11px/16px "Open Sans", sans-serif; color: #111; }
.menu button { display: flex; align-items: center; gap: 15px; height: 22px; border: 0; background: none; padding: 0 4px; text-align: left; }
.menu svg { width: 16px; height: 16px; }
.menu hr { height: 1px; width: 152px; margin: 1px 0 1px auto; border: 0; background: #aaa; }
.menu .hot { background: #dfeafc; }
.mark { position: absolute; left: 0; right: 0; top: 43px; height: 35px; border: 5px solid #e8151f; }
```
FILE: app.js
```javascript
const NS = "http://www.w3.org/2000/svg";
const INCH = 102.9;
function add(parent, name, attrs, text) {
  const el = document.createElementNS(NS, name);
  for (const key in attrs) el.setAttribute(key, attrs[key]);
  if (text !== undefined) el.textContent = text;
  parent.appendChild(el);
}
function rect(parent, x, y, width, height, fill) {
  add(parent, "rect", { x, y, width, height, fill });
}

// horizontal ruler: margins, cursor mark, inches and half inches
const h = document.getElementById("hruler");
rect(h, 10, 4, 875, 1, "#ddd");
rect(h, 10, 18, 875, 1, "#ddd");
rect(h, 10, 4, 40, 15, "#e4e4e4");
rect(h, 845, 4, 40, 15, "#e4e4e4");
rect(h, 863, 5, 5, 13, "#c5d5f0");
for (let n = 0; n < 8; n++) {
  add(h, "text", { x: Math.round(50 + n * INCH), y: 14 }, n);
  rect(h, Math.round(50 + (n + 0.5) * INCH), 7, 1, 9, "#555");
}

// vertical ruler
const v = document.getElementById("vruler");
rect(v, 0, 10, 1, 600, "#ddd");
rect(v, 14, 10, 1, 600, "#ddd");
rect(v, 0, 10, 15, 40, "#e4e4e4");
rect(v, 0, 113, 14, 5, "#c5d5f0");
for (let n = 0; n < 5; n++) {
  add(v, "text", { x: 7, y: Math.round(54 + n * INCH) }, n);
  rect(v, 3, Math.round(50 + (n + 0.5) * INCH), 9, 1, "#555");
}

// snap grid: ten steps to the inch, every second line darker
const g = document.getElementById("grid");
for (const shade of [1, 0]) {
  const color = shade ? "#dcdcdc" : "#b4b4b4";
  for (let i = shade; i < 98; i += 2) {
    const p = Math.round(i * INCH / 10);
    if (p < 796) rect(g, p, 0, 1, 1000, color);
    rect(g, 0, p, 796, 1, color);
  }
}
rect(g, 0, 0, 796, 1, "#666");
rect(g, 0, 0, 1, 1000, "#666");
rect(g, 795, 0, 1, 1000, "#666");
```
